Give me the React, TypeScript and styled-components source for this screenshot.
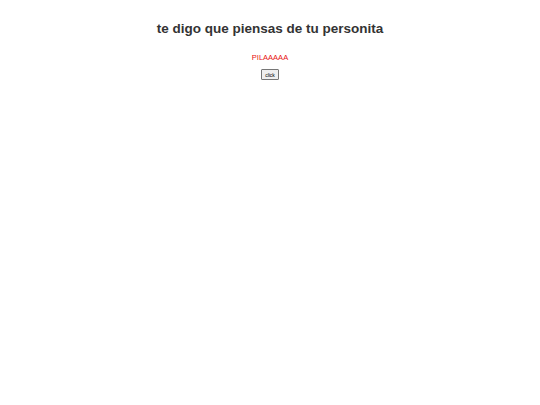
import React from "react";
import styled, { createGlobalStyle } from "styled-components";

const Global = createGlobalStyle`
  html, body { margin: 0; padding: 0; background: #fff; }
  body { font-family: "Liberation Sans", Arial, sans-serif; }
`;

const Page = styled.div`
  display: flex;
  flex-direction: column;
  align-items: center;
  padding-top: 21px;
`;

const Title = styled.h1`
  margin: 0;
  font-size: 13.5px;
  font-weight: bold;
  color: #333;
  line-height: 16px;
`;

const Message = styled.p`
  margin: 16px 0 0;
  font-size: 7.5px;
  color: #e81010;
  line-height: 9px;
`;

const Button = styled.button`
  margin-top: 7px;
  font-family: "Liberation Sans", Arial, sans-serif;
  font-size: 5px;
  line-height: 6px;
  padding: 1.5px 3px;
  background: #efefef;
  border: 1px solid #767676;
  border-radius: 1px;
  color: #000;
`;

export default function App() {
  return (
    <>
      <Global />
      <Page>
        <Title>te digo que piensas de tu personita</Title>
        <Message>PILAAAAA</Message>
        <Button>click</Button>
      </Page>
    </>
  );
}
